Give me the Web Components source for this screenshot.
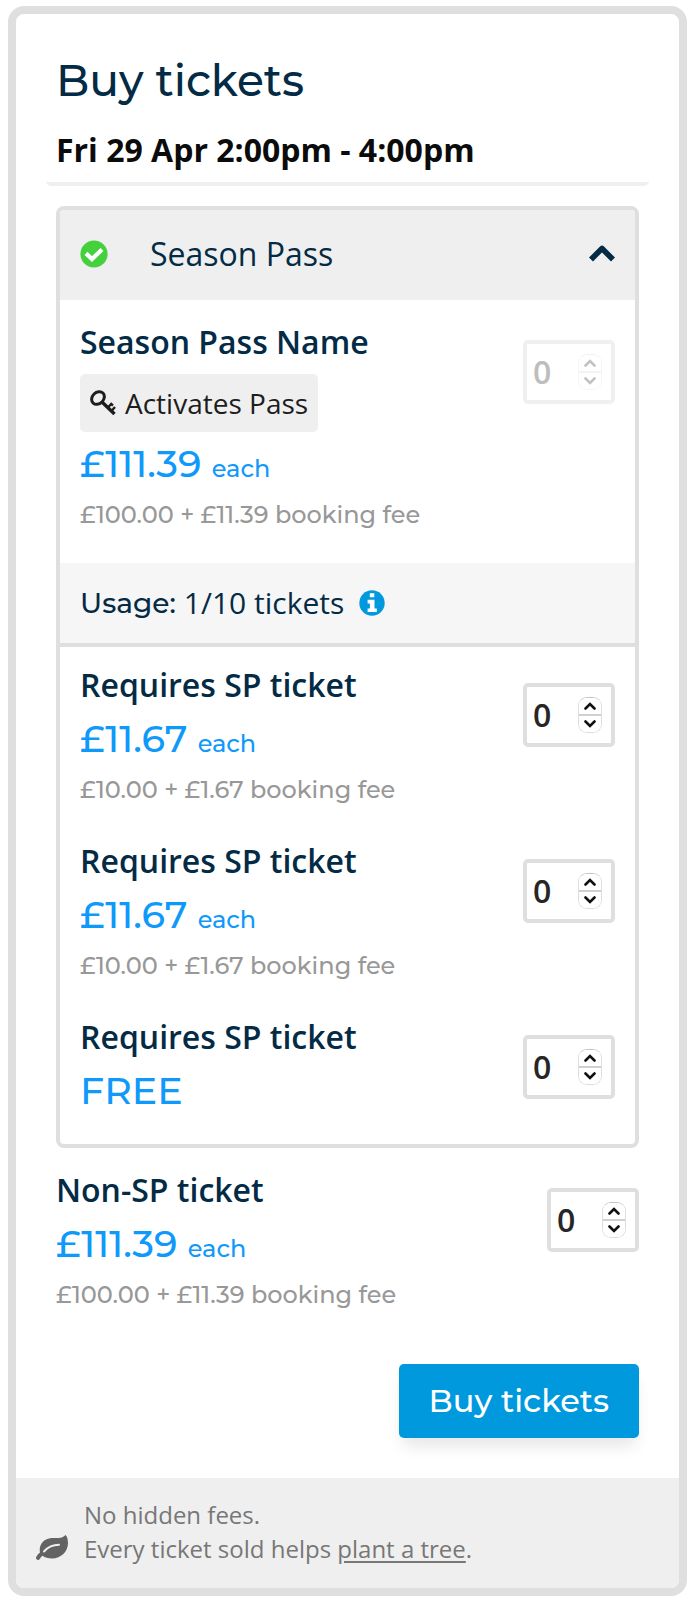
<!DOCTYPE html>
<html lang="en">
<head>
<meta charset="utf-8">
<meta name="viewport" content="width=device-width, initial-scale=1">
<title>Buy tickets</title>
<style>
  :root {
    --font-body: "Open Sans", "Noto Sans", sans-serif;
    --font-display: Montserrat, Inter, sans-serif;
    --navy: #042b45;
    --price: #0f99fa;
    --brand: #0099de;
    --line: #dfdfdf;
    --shade: #efefef;
  }
  body {
    margin: 0;
    padding: 6px 10px 4px 8px;
    background: #fff;
    color: var(--navy);
    font-family: var(--font-body);
    font-size: 32px;
  }
</style>
</head>
<body>
<ticket-widget>
  <span slot="title">Buy tickets</span>
  <session-date>Fri 29 Apr 2:00pm - 4:00pm</session-date>
  <pass-panel>
    <span slot="title">Season Pass</span>
    <ticket-row slot="pass" disabled>
      Season Pass Name
      <pass-badge slot="badge">Activates Pass</pass-badge>
      <span slot="price">£111.39</span>
      <span slot="unit">each</span>
      <span slot="fee">£100.00 + £11.39 booking fee</span>
    </ticket-row>
    <usage-bar slot="usage"><span slot="label">Usage:</span>1/10 tickets</usage-bar>
    <ticket-row>
      Requires SP ticket
      <span slot="price">£11.67</span>
      <span slot="unit">each</span>
      <span slot="fee">£10.00 + £1.67 booking fee</span>
    </ticket-row>
    <ticket-row>
      Requires SP ticket
      <span slot="price">£11.67</span>
      <span slot="unit">each</span>
      <span slot="fee">£10.00 + £1.67 booking fee</span>
    </ticket-row>
    <ticket-row>
      Requires SP ticket
      <span slot="price">FREE</span>
    </ticket-row>
  </pass-panel>
  <ticket-row>
    Non-SP ticket
    <span slot="price">£111.39</span>
    <span slot="unit">each</span>
    <span slot="fee">£100.00 + £11.39 booking fee</span>
  </ticket-row>
  <buy-action>Buy tickets</buy-action>
  <fee-note slot="footer">No hidden fees.<br>Every ticket sold helps <a href="#tree">plant a tree</a>.</fee-note>
</ticket-widget>

<script>
  const define = (name, html, setup) => {
    const template = document.createElement('template');
    template.innerHTML = html;
    customElements.define(name, class extends HTMLElement {
      constructor() {
        super();
        this.attachShadow({ mode: 'open' }).append(template.content.cloneNode(true));
      }
      connectedCallback() {
        if (setup) setup(this, this.shadowRoot);
      }
    });
  };

  define('ticket-widget', `
    <style>
      :host { display: block; border: 8px solid var(--line); border-radius: 16px; background: #fff; }
      main { padding: 36px 40px 40px; }
      h1 { margin: 0 0 18px; font: 500 44px/60px var(--font-display); }
    </style>
    <main>
      <h1><slot name="title"></slot></h1>
      <slot></slot>
    </main>
    <slot name="footer"></slot>`);

  define('session-date', `
    <style>
      :host { display: block; margin: 0 -10px 20px; padding: 0 10px 10px; border-bottom: 4px solid var(--shade); border-radius: 5px; }
      h2 { margin: 0; color: #0b0b0b; font: 700 32px/44px var(--font-body); }
    </style>
    <h2><slot></slot></h2>`);

  define('pass-panel', `
    <style>
      :host { display: block; margin-bottom: 4px; border: 4px solid var(--line); border-radius: 8px; }
      button {
        display: flex; align-items: center; gap: 42px; box-sizing: border-box;
        width: 100%; height: 90px; margin: 0; padding: 0 20px 2px; border: 0; border-radius: 4px 4px 0 0;
        background: var(--shade); color: inherit; font: 400 32px/44px var(--font-body); text-align: left;
      }
      .title { flex: 1; }
      .check { width: 28px; height: 28px; }
      .chevron { width: 26px; height: 20px; }
      .pass { padding: 4px 20px 15px; }
      .rows { padding: 0 20px 7px; }
      .closed { display: none; }
    </style>
    <button type="button" aria-expanded="true">
      <svg class="check" viewBox="0 0 28 28" aria-hidden="true">
        <circle cx="14" cy="14" r="13.6" fill="#45d13d"/>
        <path d="M7.500 14.800l4.500 4.200L20.500 11" fill="none" stroke="#fff" stroke-width="4.200" stroke-linecap="square"/>
      </svg>
      <span class="title"><slot name="title"></slot></span>
      <svg class="chevron" viewBox="0 0 26 20" aria-hidden="true">
        <path d="M2 15.500L13 4.500 24 15.500" fill="none" stroke="#042b45" stroke-width="5.600" stroke-linejoin="round"/>
      </svg>
    </button>
    <div id="body">
      <div class="pass"><slot name="pass"></slot></div>
      <slot name="usage"></slot>
      <div class="rows"><slot></slot></div>
    </div>`, (host, root) => {
      const button = root.querySelector('button');
      button.onclick = () => {
        const closed = root.getElementById('body').classList.toggle('closed');
        button.setAttribute('aria-expanded', String(!closed));
      };
    });

  define('pass-badge', `
    <style>
      :host {
        display: flex; align-items: center; gap: 8px; box-sizing: border-box; width: fit-content; height: 58px;
        margin-top: 10px; padding: 0 10px; border-radius: 5px; background: var(--shade);
        color: #1d1d1d; font: 400 28px/38px var(--font-body);
      }
      svg { flex: none; width: 27px; height: 26px; }
    </style>
    <svg viewBox="0 0 27 26" fill="none" stroke="#1d1d1d" aria-hidden="true">
      <ellipse cx="8" cy="8" rx="5.600" ry="7" transform="rotate(45 8 8)" stroke-width="3"/>
      <path d="M12 12L24.500 24" stroke-width="3.400"/>
      <path d="M18 17.500l4-4.500M21.500 21l3.500-4M20.500 13.500l2.500 2" stroke-width="2.400"/>
    </svg>
    <slot></slot>`);

  define('usage-bar', `
    <style>
      :host {
        display: flex; align-items: center; gap: 8px; box-sizing: border-box; height: 84px; padding: 0 20px;
        border-bottom: 4px solid var(--line); background: #f6f6f6; font: 400 30px/40px var(--font-body);
      }
      ::slotted([slot="label"]) { font: 500 28px/40px var(--font-display); }
      button { display: flex; margin: 0 0 0 7px; padding: 0; border: 0; background: none; }
      svg { width: 26px; height: 26px; }
    </style>
    <slot name="label"></slot><slot></slot>
    <button type="button" aria-label="About pass usage">
      <svg viewBox="0 0 26 26" aria-hidden="true">
        <circle cx="13" cy="13" r="12.7" fill="#0099de"/>
        <path d="M10.8 3.2h4.5v4h-4.5zM8.6 9.8h6.9v8.6h2.3V22H8.6v-3.6h2.3v-5H8.6z" fill="#fff"/>
      </svg>
    </button>`);

  define('ticket-row', `
    <style>
      :host { display: flex; justify-content: space-between; align-items: flex-start; padding: 16px 0 14px; }
      label { display: block; font: 600 32px/44px var(--font-body); }
      .price { color: var(--price); font: 500 38px/64px var(--font-display); }
      .price slot[name="unit"] { font-size: 24px; line-height: 24px; }
      .fee { color: #989898; font: 500 24px/38px var(--font-display); }
      .qty {
        display: flex; align-items: center; justify-content: space-between; box-sizing: border-box; flex: none;
        width: 92px; height: 64px; margin-top: 20px; padding: 0 9px 0 6px;
        border: 4px solid var(--line); border-radius: 5px; background: #fff;
      }
      input {
        appearance: textfield; width: 36px; height: 48px; margin: 0; padding: 0; border: 0; background: none;
        color: #262626; opacity: 1; font: 600 32px/48px var(--font-body);
      }
      input::-webkit-inner-spin-button, input::-webkit-outer-spin-button { appearance: none; margin: 0; }
      .spin {
        display: flex; flex-direction: column; box-sizing: border-box; width: 24px; height: 36px;
        border: 1px solid #dedede; border-top-color: #c4c4c4; border-radius: 9px; overflow: hidden;
      }
      .spin button { display: grid; place-items: center; flex: 1; margin: 0; padding: 0; border: 0; background: #fff; }
      .spin button + button { border-top: 2px solid #d0d0d0; }
      .spin svg { width: 12px; height: 8px; fill: none; stroke: #111; stroke-width: 2.600; stroke-linecap: round; }
      :host([disabled]) .qty { border-color: #f0f0f0; }
      :host([disabled]) input { color: #bdbdbd; }
      :host([disabled]) .spin { opacity: .25; }
    </style>
    <div>
      <label for="qty"><slot></slot></label>
      <slot name="badge"></slot>
      <div class="price"><slot name="price"></slot> <slot name="unit"></slot></div>
      <div class="fee"><slot name="fee"></slot></div>
    </div>
    <div class="qty">
      <input id="qty" type="number" min="0" value="0">
      <div class="spin">
        <button type="button" data-step="1" aria-label="More"><svg viewBox="0 0 12 8"><path d="M1.500 6.500L6 2l4.500 4.500"/></svg></button>
        <button type="button" data-step="-1" aria-label="Fewer"><svg viewBox="0 0 12 8"><path d="M1.500 1.500L6 6l4.500-4.500"/></svg></button>
      </div>
    </div>`, (host, root) => {
      const input = root.querySelector('input');
      const off = host.hasAttribute('disabled');
      input.disabled = off;
      if (!host.querySelector('[slot="fee"]')) root.querySelector('.fee').remove();
      root.querySelectorAll('button').forEach(b => {
        b.disabled = off;
        b.onclick = () => { input.value = Math.max(0, Number(input.value) + Number(b.dataset.step)); };
      });
    });

  define('buy-action', `
    <style>
      :host { display: flex; justify-content: flex-end; margin-top: 36px; }
      button {
        height: 74px; margin: 0; padding: 0 30px; border: 0; border-radius: 5px;
        background: var(--brand); color: #fff; font: 500 32px/44px var(--font-display);
        box-shadow: 0 12px 16px -4px rgba(0, 0, 0, .1);
      }
    </style>
    <button type="button"><slot></slot></button>`);

  define('fee-note', `
    <style>
      :host {
        display: flex; align-items: flex-end; gap: 16px; padding: 20px 20px 22px; border-radius: 0 0 8px 8px;
        background: var(--shade); color: #777; font: 400 24px/34px var(--font-body);
      }
      svg { flex: none; width: 32px; height: 25px; margin-bottom: 6px; }
      p { margin: 0; }
      ::slotted(a) { color: inherit; text-underline-offset: 3px; }
    </style>
    <svg viewBox="0 0 32 25" aria-hidden="true">
      <path d="M29.5 0C31 1 32 4.500 32 8c0 8.500-7 15.500-16 15.500-3.800 0-7-1-9.500-2.700-1 .8-2 1.700-2.600 3C3.200 25 1.800 25.300.8 24.600c-1-.7-1-2-.3-3C1.300 20 2.500 18.700 4 17.600 2.500 10 7.500 3.500 15.500 3h7c3 0 5-1 7-3z" fill="#636363"/>
      <path d="M8 16.500C12 12 17 9.800 23 9.800" fill="none" stroke="#efefef" stroke-width="2" stroke-linecap="round"/>
    </svg>
    <p><slot></slot></p>`);
</script>
</body>
</html>
